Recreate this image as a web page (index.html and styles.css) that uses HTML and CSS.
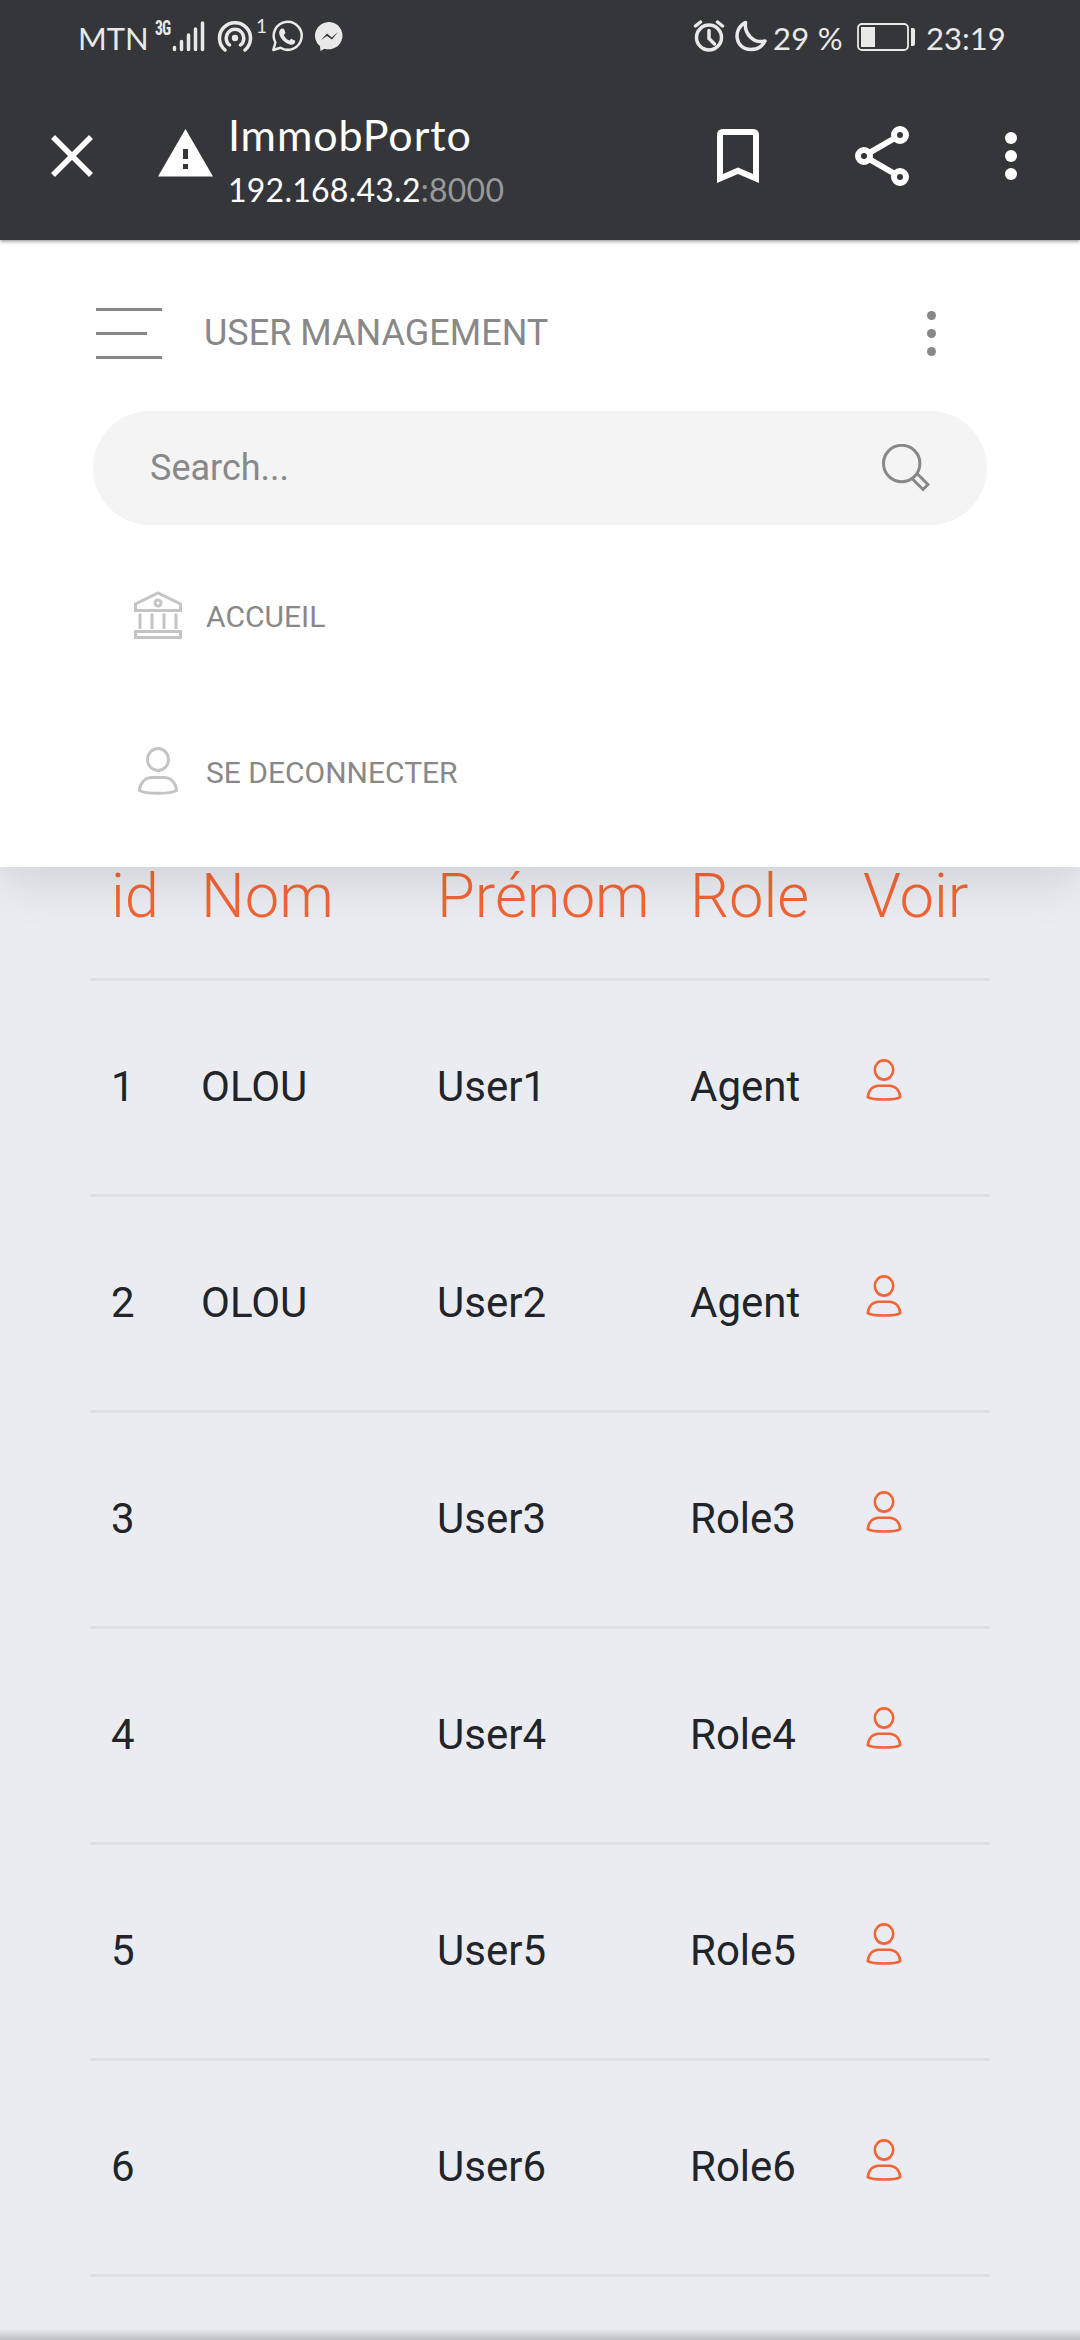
FILE: index.html
```html
<!DOCTYPE html>
<html lang="fr">
<head>
<meta charset="utf-8">
<title>ImmobPorto</title>
<link rel="stylesheet" href="styles.css">
</head>
<body>
<svg class="symbols" width="0" height="0">
  <symbol id="person" viewBox="0 0 48 48"><ellipse cx="24" cy="12.5" rx="10.5" ry="11"/><path d="M5.5 43.5C6 36 11 30.5 18 30.5H30C37 30.5 42 36 42.500 43.500C36 47.200 12 47.200 5.500 43.500Z"/></symbol>
</svg>
<header class="browser">
  <div class="status">
    <span class="carrier">MTN</span>
    <span class="network">3G</span>
    <svg class="signal" width="34" height="32" viewBox="0 0 34 32"><path d="M2.500 27.500v2M9.500 21.500v8M16.500 15v14.500M23.500 9v20.500M30.500 3v26.500"/></svg>
    <svg class="hotspot" width="36" height="32" viewBox="0 0 36 32"><circle class="solid" cx="18" cy="18" r="3.200"/><path d="M8 30A15.500 15.500 0 1 1 28 30M12.500 25A8.800 8.800 0 1 1 23.500 25"/></svg>
    <span class="count">1</span>
    <svg class="whatsapp" width="32" height="32" viewBox="0 0 32 32"><path d="M2.300 30L4.400 22.500A14 14 0 1 1 9.500 27.800Z"/><path class="solid" d="M10.500 8.500L13 8.800L14.500 13L12.800 15C14 18 16 19.600 18.500 20.500L20.200 18.700L24.200 20.800C24.500 24 21.500 25.300 19 24.500C13 22.700 9.500 18.500 8.300 14C7.700 11.500 8.900 9.400 10.500 8.500Z"/></svg>
    <svg class="messenger" width="29" height="29" viewBox="0 0 29 29"><path class="disc" d="M14.500 0A14 13.700 0 1 1 9.500 26.800L5.500 29L5 24.200A14 13.700 0 0 1 14.500 0Z"/><path class="bolt" d="M6 18L12 11.500L16.800 15.500L23 10L17 17.500L12 14Z"/></svg>
    <svg class="alarm" width="32" height="32" viewBox="0 0 32 32"><circle cx="16" cy="17.500" r="12.500"/><path d="M16 10.500v8l5.500 5.500M2.500 6L7.500 2M29.500 6L24.500 2"/></svg>
    <svg class="moon" width="33" height="32" viewBox="0 0 33 32"><path d="M11.500 2.500C-1 8 0 29.500 17 29.500C24 29.500 28.500 26 31 21C20 24 10 14 11.500 2.500Z"/></svg>
    <span class="percent">29 %</span>
    <svg class="battery" width="60" height="28" viewBox="0 0 60 28"><rect x="1" y="1" width="50" height="26" rx="4"/><path class="solid" d="M4 4h14v20H4zM54 5h2q2 0 2 2v14q0 2-2 2h-2z"/></svg>
    <span class="clock">23:19</span>
  </div>
  <div class="toolbar">
    <svg class="close" width="42" height="42" viewBox="0 0 42 42"><path d="M2 2L40 40M40 2L2 40"/></svg>
    <svg class="warning" width="56" height="48" viewBox="0 0 56 48"><path d="M27.500 0L55 47.500H0Z"/><path class="mark" d="M25 20h5v10h-5zM25 35h5v5h-5z"/></svg>
    <div class="site"><div class="title">ImmobPorto</div><div class="url">192.168.43.2<span class="port">:8000</span></div></div>
    <svg class="bookmark" width="42" height="54" viewBox="0 0 42 54"><path fill-rule="evenodd" d="M6 0H36Q42 0 42 6V54L21 45L0 54V6Q0 0 6 0ZM6 6V45L21 38.500L36 45V6Z"/></svg>
    <svg class="share" width="54" height="60" viewBox="0 0 54 60"><circle cx="45" cy="9" r="6"/><circle cx="9" cy="30" r="6"/><circle cx="45" cy="51" r="6"/><path d="M14 27L40 12M14 33L40 48"/></svg>
    <svg class="more" width="12" height="48" viewBox="0 0 12 48"><circle cx="6" cy="6" r="6"/><circle cx="6" cy="24" r="6"/><circle cx="6" cy="42" r="6"/></svg>
  </div>
</header>
<nav class="panel">
  <div class="heading">
    <svg class="burger" width="66" height="51" viewBox="0 0 66 51"><path d="M0 0H66V3H0zM0 24H51V27H0zM0 48H66V51H0z"/></svg>
    <span class="page-name">USER MANAGEMENT</span>
    <svg class="dots" width="9" height="45" viewBox="0 0 9 45"><circle cx="4.500" cy="4.500" r="4.500"/><circle cx="4.500" cy="22.500" r="4.500"/><circle cx="4.500" cy="40.500" r="4.500"/></svg>
  </div>
  <div class="search">
    <span>Search...</span>
    <svg width="48" height="48" viewBox="0 0 48 48"><circle cx="19.700" cy="19.500" r="18.200"/><path d="M30.500 35L41 45.500L46 40.500L35.500 30"/></svg>
  </div>
  <div class="link">
    <svg width="48" height="48" viewBox="0 0 48 48"><path d="M1.500 19.500V13L24 2L46.500 13V19.500ZM1.500 40.500H46.500V46.500H1.500ZM6 22.500V38M18 22.500V38M30 22.500V38M42 22.500V38"/><circle cx="24" cy="12" r="3"/></svg>
    <span>ACCUEIL</span>
  </div>
  <div class="link">
    <svg width="48" height="48"><use href="#person"/></svg>
    <span>SE DECONNECTER</span>
  </div>
</nav>
<main class="content">
  <table class="users">
    <colgroup><col class="c-id"><col class="c-nom"><col class="c-prenom"><col class="c-role"><col class="c-voir"></colgroup>
    <thead><tr><th>id</th><th>Nom</th><th>Prénom</th><th>Role</th><th>Voir</th></tr></thead>
    <tbody>
      <tr><td>1</td><td>OLOU</td><td>User1</td><td>Agent</td><td><svg class="view"><use href="#person"/></svg></td></tr>
      <tr><td>2</td><td>OLOU</td><td>User2</td><td>Agent</td><td><svg class="view"><use href="#person"/></svg></td></tr>
      <tr><td>3</td><td></td><td>User3</td><td>Role3</td><td><svg class="view"><use href="#person"/></svg></td></tr>
      <tr><td>4</td><td></td><td>User4</td><td>Role4</td><td><svg class="view"><use href="#person"/></svg></td></tr>
      <tr><td>5</td><td></td><td>User5</td><td>Role5</td><td><svg class="view"><use href="#person"/></svg></td></tr>
      <tr><td>6</td><td></td><td>User6</td><td>Role6</td><td><svg class="view"><use href="#person"/></svg></td></tr>
    </tbody>
  </table>
</main>
</body>
</html>
```
FILE: styles.css
```css
* { box-sizing: border-box; }
body {
  margin: 0;
  width: 1080px;
  height: 2340px;
  overflow: hidden;
  display: flex;
  flex-direction: column;
  background: #ebecf1;
  font-family: Roboto, sans-serif;
  color: #212529;
}
svg { display: block; flex: none; fill: none; stroke: currentColor; }
.symbols { position: absolute; }

/* Browser chrome */
.browser {
  height: 240px;
  flex: none;
  position: relative;
  z-index: 2;
  background: #35363a;
  color: #fff;
  font-family: Lato, sans-serif;
  box-shadow: 0 1px 4px rgba(50, 40, 50, .6);
}
.status {
  height: 72px;
  padding: 20px 78px 0 78px;
  display: flex;
  align-items: flex-start;
  color: #e9e9e9;
  white-space: nowrap;
}
.status svg { stroke-width: 3.5; stroke-linecap: round; stroke-linejoin: round; }
.status .solid { fill: currentColor; stroke: none; }
.carrier, .percent, .clock { font-size: 31px; line-height: 36px; }
.carrier { width: 77px; }
.network { width: 17px; font: bold 20px/17px "Roboto Condensed", Roboto, sans-serif; letter-spacing: -1px; transform: scaleX(.78); transform-origin: left; }
.signal { width: 34px; }
.hotspot { margin-left: 11px; }
.count { width: 16px; margin-left: 1px; padding-left: 2px; font-size: 19px; line-height: 12px; }
.whatsapp { margin-left: 1px; }
.status .whatsapp { stroke-width: 2.5; }
.messenger { margin: 2px 0 0 12px; }
.disc { fill: currentColor; stroke: none; }
.bolt { fill: #35363a; stroke: none; }
.alarm { margin-left: auto; }
.moon { margin-left: 9px; }
.percent { width: 76px; margin-left: 6px; letter-spacing: .3px; }
.battery { margin: 3px 0 0 8px; }
.status .battery { stroke-width: 1.8; }
.clock { width: 76px; margin-left: 9px; }

.toolbar { height: 168px; padding: 0 63px 0 51px; display: flex; align-items: center; }
.close { stroke-width: 5.5; }
.warning { margin: 0 0 7px 65px; fill: currentColor; stroke: none; }
.mark { fill: #35363a; }
.site { width: 300px; margin: 11px 0 0 14px; }
.title { font-size: 43px; line-height: 56px; letter-spacing: .9px; }
.url { font-size: 32px; line-height: 53px; letter-spacing: .25px; }
.port { color: #98999b; }
.bookmark { margin-left: 189px; fill: currentColor; stroke: none; }
.share { margin-left: 96px; stroke-width: 6; }
.more { margin-left: 96px; fill: currentColor; stroke: none; }

/* Navigation panel */
.panel {
  height: 627px;
  flex: none;
  position: relative;
  z-index: 1;
  padding: 0 93px;
  background: #fff;
  color: #888;
  box-shadow: 0 15px 48px -2px rgba(0, 0, 0, .12);
}
.heading { height: 171px; padding: 15px 51px 0 3px; display: flex; align-items: center; }
.burger, .dots { fill: currentColor; stroke: none; }
.page-name { margin-left: 42px; font-size: 36px; line-height: 48px; }
.dots { margin-left: auto; }
.search {
  height: 114px;
  padding: 0 57px;
  display: flex;
  align-items: center;
  justify-content: space-between;
  border-radius: 57px;
  background: #f4f4f4;
  font-size: 36px;
}
.search svg { stroke-width: 3; }
.link {
  height: 48px;
  margin-top: 66px;
  padding-left: 41px;
  display: flex;
  align-items: center;
  gap: 24px;
  font-size: 30px;
}
.link span { padding-top: 3px; }
.link + .link { margin-top: 108px; }
.link svg { color: #c4c4c4; stroke-width: 3; }

/* User table */
.content { flex: 1; padding: 0 90px; background: linear-gradient(to top, #bfc0c3, #ebecf1 11px); }
.users { width: 900px; table-layout: fixed; border-collapse: collapse; }
.c-id { width: 89px; }
.c-nom { width: 236px; }
.c-prenom { width: 253px; }
.c-role { width: 173px; }
th { height: 111px; padding: 0 0 53px 22px; color: #f26535; font-size: 61.5px; line-height: 58px; font-weight: 300; text-align: left; }
td { height: 216px; padding: 0 0 2px 22px; border-top: 3px solid #dee0e5; font-size: 42px; }
th:first-child, td:first-child { padding-left: 21px; }
tbody tr:last-child td { border-bottom: 3px solid #dee0e5; }
.view { width: 42px; height: 42px; margin-bottom: 13px; color: #f26535; stroke-width: 3; }
```
